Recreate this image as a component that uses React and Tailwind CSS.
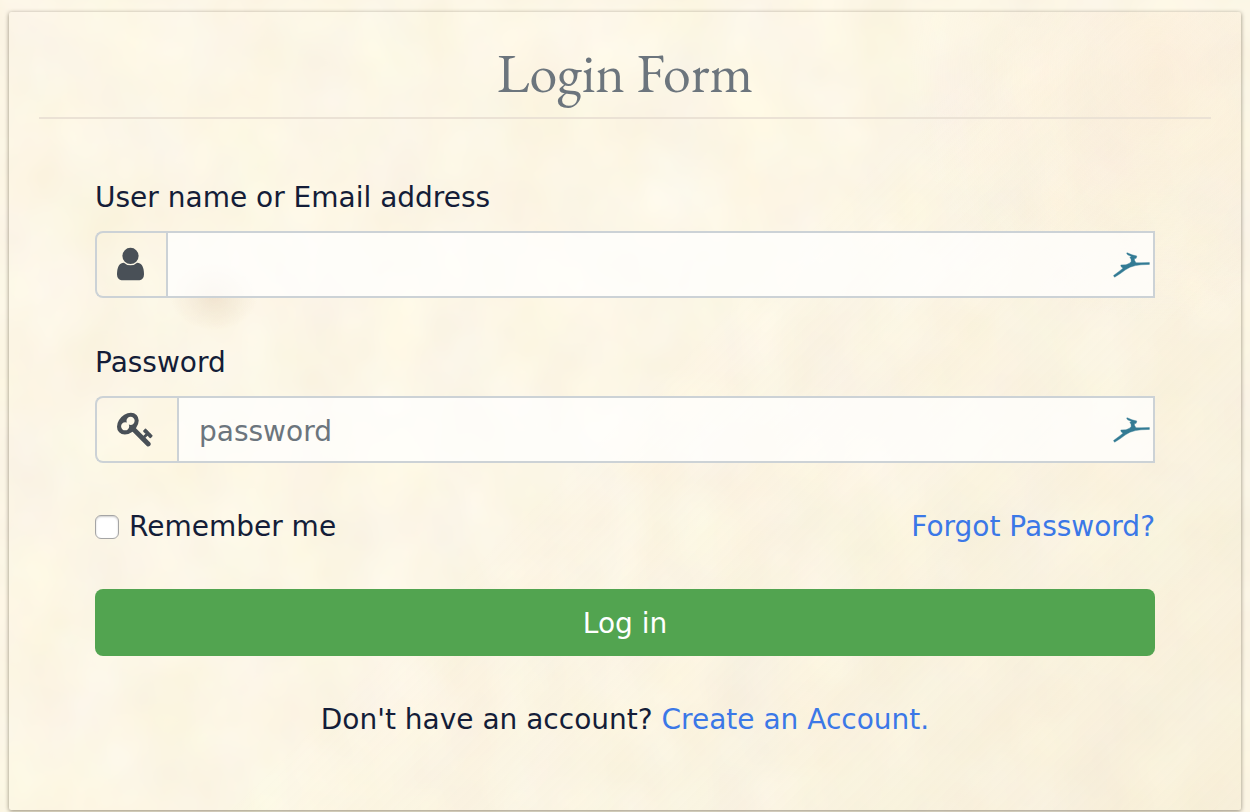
const UserIcon = () => (
    <svg viewBox="0 0 1280 1792" className="h-[38px] w-[27px]" fill="currentColor" aria-hidden="true">
        <path d="M1280 1399q0 109-62.5 187t-150.5 78h-854q-88 0-150.5-78t-62.5-187q0-85 8.5-160.5t31.5-152 58.5-131 94-89 134.5-34.5q131 128 313 128t313-128q76 0 134.5 34.5t94 89 58.5 131 31.5 152 8.5 160.5zm-256-887q0 159-112.5 271.5t-271.5 112.5-271.5-112.5-112.5-271.5 112.5-271.5 271.5-112.5 271.5 112.5 112.5 271.5z" />
    </svg>
);

const KeyIcon = () => (
    <svg viewBox="0 0 1792 1792" className="h-[38px] w-[38px]" fill="currentColor" aria-hidden="true">
        <path d="M832 512q0-80-56-136t-136-56-136 56-56 136q0 42 19 83-41-19-83-19-80 0-136 56t-56 136 56 136 136 56 136-56 56-136q0-42-19-83 41 19 83 19 80 0 136-56t56-136zm851 704q0 17-49 66t-66 49q-9 0-28.5-16t-36.5-33-38.5-40-24.5-26l-96 96 220 220q28 28 28 68 0 42-39 81t-81 39q-40 0-68-28l-671-671q-176 131-365 131-163 0-265.5-102.5t-102.5-265.5q0-160 95-313t248-248 313-95q163 0 265.5 102.5t102.5 265.5q0 189-131 365l355 355 96-96q-3-3-26-24.5t-40-38.5-33-36.5-16-28.5q0-17 49-66t66-49q13 0 23 10 6 6 46 44.5t82 79.5 86.5 86 73 78 28.5 41z" />
    </svg>
);

// leaping impala shown by the password manager
const ImpalaIcon = () => (
    <svg
        viewBox="0 0 38 26"
        className="pointer-events-none absolute right-1 top-1/2 h-[26px] w-[38px] -translate-y-1/2"
        fill="#337b94"
        stroke="#337b94"
        strokeWidth="0.4"
        strokeLinejoin="round"
        aria-hidden="true"
    >
        <path d="M13.6 1 L14.2 0.8 L19 2.8 L23.8 4 L23.2 6.2 L21.4 6.8 L21.6 8.6 L23 10.8 L28 10.8 L36.4 10.6 L36.4 12.4 L28 12.8 L22.5 13.6 L17 15.2 L12.5 17.8 L7 21.8 L1.6 25.2 L0.5 23.6 L6 19.4 L10 16.2 L8 14.6 L7.8 13 L13 12.8 L16.6 11.2 L18.2 9.4 L18 7 L16.8 5.4 L18.4 4.6 L14.6 2.8 Z" />
    </svg>
);

// mottled parchment
const Paper = () => (
    <svg className="pointer-events-none absolute inset-0 h-full w-full" aria-hidden="true">
        <filter id="mottle" x="0" y="0" width="100%" height="100%" colorInterpolationFilters="sRGB">
            <feTurbulence type="fractalNoise" baseFrequency="0.014 0.012" numOctaves="3" seed="7" />
            <feColorMatrix values="0.025 0.02 0 0 0.966  0.008 0.042 0 0 0.94  0.01 0.04 0.05 0 0.85  0 0 0 0 1" />
        </filter>
        <rect width="100%" height="100%" filter="url(#mottle)" />
    </svg>
);

const Field = ({ id, label, type, placeholder, icon }) => (
    <div className="flex flex-col gap-[10px]">
        <label htmlFor={id} className="self-start leading-[46px]">{label}</label>
        <div className="flex h-[67px]">
            <span className="flex items-center rounded-l-lg border-2 border-r-0 border-[#ccd2d6] pr-[22px] pb-0.5 pl-5 text-[#495057]">
                {icon}
            </span>
            <div className="relative flex-1">
                <input
                    id={id}
                    type={type}
                    placeholder={placeholder}
                    className="h-full w-full border-2 border-[#ccd2d6] bg-white/75 pt-1 pr-12 pl-5 outline-none placeholder:text-[#6c757d] placeholder:opacity-100"
                />
                <ImpalaIcon />
            </div>
        </div>
    </div>
);

const App = () => {
    return (
        <main className="relative min-h-screen bg-[#fcf6e5] px-2 pt-3 font-['DejaVu_Sans',Verdana,sans-serif] text-[28px] text-[#141d38]">
            <Paper />
            <section className="relative mx-px rounded-xs bg-[radial-gradient(ellipse_44px_34px_at_205px_284px,rgba(225,205,180,0.45),transparent),radial-gradient(circle_at_93%_8%,rgba(250,230,208,0.4),transparent_18%),linear-gradient(135deg,transparent_50%,rgba(240,228,196,0.35))] px-[30px] pt-[26px] pb-[68px] shadow-[0_1px_4px_rgba(60,50,30,0.55)]">
                <h1 className="border-b-2 border-[#ebe2d5] pb-[10px] text-center font-['EB_Garamond','Liberation_Serif',serif] text-[56px] leading-[69px] text-[#6c757d]">
                    Login Form
                </h1>

                <form className="flex flex-col px-14 pt-14" onSubmit={(e) => e.preventDefault()}>
                    <div className="flex flex-col gap-[42px]">
                        <Field id="username" label="User name or Email address" type="text" icon={<UserIcon />} />
                        <Field id="password" label="Password" type="password" placeholder="password" icon={<KeyIcon />} />
                    </div>

                    <div className="mt-[42px] flex items-center justify-between leading-11">
                        <label className="flex items-center gap-[10px]">
                            <input
                                type="checkbox"
                                className="size-6 appearance-none rounded-md border border-[#a5a5a5] bg-white shadow-[inset_0_1px_2px_rgba(0,0,0,0.2)] checked:bg-[#3b78e7]"
                            />
                            Remember me
                        </label>
                        <a href="#forgot" className="text-[#3b78e7]">Forgot Password?</a>
                    </div>

                    <button type="submit" className="mt-10 h-[67px] rounded-lg bg-[#52a450] pt-0.5 text-white">
                        Log in
                    </button>

                    <p className="mt-[42px] text-center leading-11">
                        Don't have an account? <a href="#register" className="text-[#3b78e7]">Create an Account.</a>
                    </p>
                </form>
            </section>
        </main>
    );
};

export default App;
